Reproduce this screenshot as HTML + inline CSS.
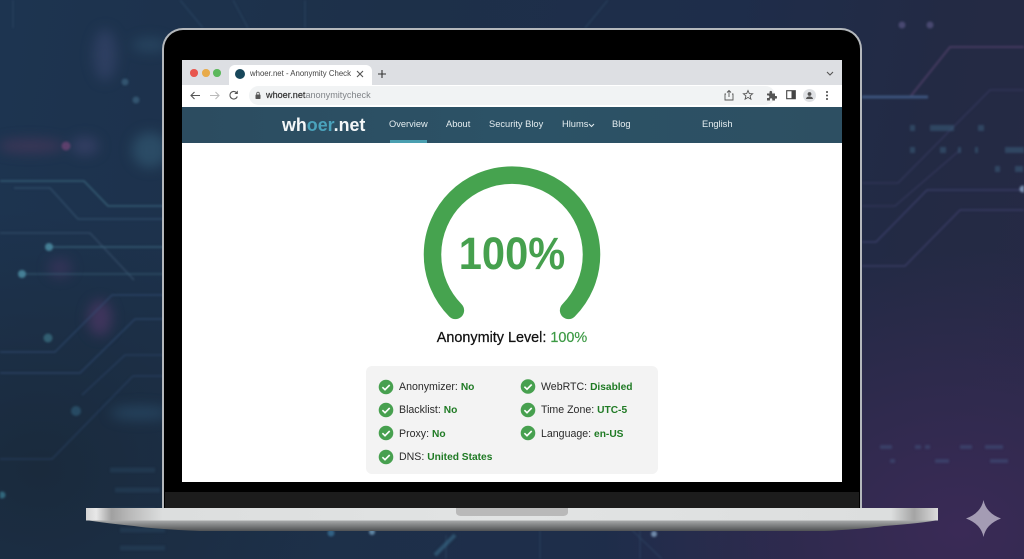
<!DOCTYPE html>
<html><head><meta charset="utf-8"><style>
*{margin:0;padding:0;box-sizing:border-box}
html,body{width:1024px;height:559px;overflow:hidden;background:#1d2f48;font-family:"Liberation Sans",sans-serif}
.a{position:absolute;white-space:nowrap}
#bg{position:absolute;left:0;top:0;width:1024px;height:559px;background:linear-gradient(100deg,#1d3450 0%,#1d3049 35%,#1e2d4a 65%,#232a44 85%,#262945 100%)}
#bg2{position:absolute;left:0;top:0;width:1024px;height:559px;background:radial-gradient(360px 280px at 960px 530px,#3a2a56 0%,rgba(58,42,86,0) 100%),radial-gradient(300px 260px at 40px 470px,#1a2a3c 0%,rgba(26,42,60,0) 100%)}
.nav{color:#e4edf0;font-size:9.3px;top:119px}
.it{font-size:10.6px;color:#2a2a2a}
.it b{color:#1f7a24;font-weight:bold;font-size:10.2px}
</style></head><body>
<div id="bg"></div><div id="bg2"></div>
<svg class="a" style="left:0;top:0;filter:blur(6px)" width="1024" height="559">
<ellipse cx="105" cy="55" rx="12" ry="26" fill="#46507c" opacity=".4"/>
<ellipse cx="30" cy="146" rx="35" ry="7" fill="#5a3a60" opacity=".5"/>
<ellipse cx="85" cy="146" rx="14" ry="9" fill="#4a4a78" opacity=".5"/>
<ellipse cx="100" cy="318" rx="12" ry="18" fill="#5c3a70" opacity=".55"/>
<ellipse cx="60" cy="268" rx="12" ry="10" fill="#5c3a70" opacity=".35"/>
<ellipse cx="150" cy="150" rx="18" ry="18" fill="#36607a" opacity=".55"/>
<ellipse cx="150" cy="45" rx="18" ry="7" fill="#36607a" opacity=".4"/>
<ellipse cx="140" cy="413" rx="30" ry="7" fill="#2f5878" opacity=".5"/>
</svg>
<svg class="a" style="left:0;top:0;filter:blur(1.1px)" width="1024" height="559" fill="none">
<g stroke="#47798f" stroke-width="1.3" opacity=".7">
<path d="M0 181H84L108 206H165"/><path d="M14 188H50L78 219H165" stroke="#3c5c78"/><path d="M0 233H90L134 280" stroke="#3e5873"/><path d="M50 247H165"/><path d="M22 274H165" opacity=".7"/>
</g>
<g stroke="#34507a" stroke-width="1.2" opacity=".7">
<path d="M0 352H55L112 295H165"/><path d="M0 373H80L135 319H165"/><path d="M82 395L125 355H165" opacity=".7"/><path d="M0 459H52L133 376H165" opacity=".7"/>
</g>
<g stroke-width="1.3" opacity=".65">
<path d="M862 97H910L950 47H1024" stroke="#5a4470" stroke-width="2"/>
<path d="M862 97H928" stroke="#4b6a9a" stroke-width="3"/>
<path d="M862 183H898L990 90H1024" stroke="#3d3f68"/><path d="M862 206H895L960 150" stroke="#3d3f68"/>
<path d="M862 242H876L927 190H1024" stroke="#4a4c80"/><path d="M862 266H905L960 210H1024" stroke="#4a4a7c"/>
</g>
<g opacity=".35" stroke="#416a8a"><path d="M233 0 248 28M180 0 203 28M608 0 585 28M13 0V28M305 0V28"/><path d="M662 559 632 530M446 535V559M540 530V559M640 530V559"/></g>
<g opacity=".8">
<circle cx="66" cy="146" r="4.500" fill="#8a4a80" opacity=".7"/><circle cx="125" cy="82" r="3.500" fill="#4b7a94" opacity=".6"/><circle cx="136" cy="100" r="3.500" fill="#4b7a94" opacity=".6"/>
<circle cx="49" cy="247" r="4" fill="#4f93a8"/><circle cx="22" cy="274" r="4" fill="#4f93a8"/><circle cx="48" cy="338" r="4.500" fill="#3f7a8c" opacity=".8"/><circle cx="2" cy="495" r="3.500" fill="#3f8aa0" opacity=".8"/><circle cx="76" cy="411" r="5" fill="#2f5c78" opacity=".8"/>
<circle cx="902" cy="25" r="3.500" fill="#5f5a8a" opacity=".8"/><circle cx="930" cy="25" r="3.500" fill="#5f5a8a" opacity=".8"/>
<circle cx="1023" cy="189" r="3.500" fill="#8ea8c8"/>
<path d="M910 128h5M930 128h24M978 128h6M910 150h5M940 150h6M958 150h3M975 150h3M1005 150h19M995 169h5M1015 169h8" stroke="#3f6c88" stroke-width="6" opacity=".55"/>
<path d="M880 447h12M915 447h6M925 447h5M960 447h12M985 447h18M890 461h5M935 461h14M990 461h18" stroke="#46608a" stroke-width="4" opacity=".5"/>
<circle cx="331" cy="533" r="3.500" fill="#3f80a8" opacity=".8"/><circle cx="372" cy="532" r="3" fill="#7aa8c8" opacity=".9"/><circle cx="654" cy="534" r="3" fill="#90b0d0" opacity=".9"/>
<path d="M110 470h45M115 490h45M110 510h45M120 530h45M120 548h45" stroke="#2e4c68" stroke-width="5" opacity=".45"/>
<path d="M435 555 455 535" stroke="#3f7a98" stroke-width="4" opacity=".6"/>
</g>
</svg>

<!-- laptop lid -->
<div class="a" style="left:162px;top:28px;width:700px;height:481px;background:#000;border:2px solid #b4b8bc;border-bottom:0;border-radius:21px 21px 0 0"></div>
<div class="a" style="left:165px;top:492px;width:694px;height:16px;background:#1c1c1c"></div>

<!-- base -->
<svg class="a" style="left:84px;top:506px" width="856" height="26">
<defs>
<linearGradient id="h" x1="0" x2="1" y1="0" y2="0"><stop offset="0" stop-color="#d4d4d4"/><stop offset=".012" stop-color="#e8e8e8"/><stop offset=".03" stop-color="#a0a0a0"/><stop offset=".05" stop-color="#b8b8b8"/><stop offset=".09" stop-color="#dcdede"/><stop offset=".5" stop-color="#e2e4e4"/><stop offset=".945" stop-color="#dcdede"/><stop offset=".972" stop-color="#a4a4a4"/><stop offset="1" stop-color="#dcdcdc"/></linearGradient>
<linearGradient id="v" x1="0" x2="0" y1="0" y2="1"><stop offset=".5" stop-color="#b0b2b2"/><stop offset="1" stop-color="#505254"/></linearGradient>
</defs>
<path d="M2 2H854V14Q840 17 800 20Q780 23 740 25H116Q70 23 50 20Q20 17 2 14Z" fill="url(#v)"/>
<path d="M2 2H854V14.500H2Z" fill="url(#h)"/>
<path d="M372 2H484V6Q484 10 478 10H378Q372 10 372 6Z" fill="#b9b9b9"/>
</svg>

<!-- screen -->
<div class="a" style="left:182px;top:60px;width:660px;height:422px;background:#fff;overflow:hidden">
 <div class="a" style="left:0;top:0;width:660px;height:25px;background:#dddfe3"></div>
 <div class="a" style="left:0;top:25px;width:660px;height:21px;background:#fff"></div>
 <div class="a" style="left:0;top:47px;width:660px;height:36px;background:linear-gradient(90deg,#2c4c60,#2c5266 50%,#2d4f62)"></div>
 <div class="a" style="left:208px;top:80px;width:37px;height:3px;background:#4a9fb0"></div>
 <!-- traffic -->
 <div class="a" style="left:8px;top:9px;width:7.5px;height:7.5px;border-radius:50%;background:#e8574f"></div>
 <div class="a" style="left:20px;top:9px;width:7.5px;height:7.5px;border-radius:50%;background:#e8ab4a"></div>
 <div class="a" style="left:31px;top:9px;width:7.5px;height:7.5px;border-radius:50%;background:#5cb85c"></div>
 <!-- tab -->
 <div class="a" style="left:47px;top:5px;width:143px;height:21px;background:#fff;border-radius:6px 6px 0 0"></div>
 <div class="a" style="left:53px;top:9px;width:10px;height:10px;border-radius:50%;background:#17475a"></div>
 <div class="a" style="left:68px;top:9px;font-size:7.8px;line-height:10px;color:#444">whoer.net - Anonymity Check</div>
 <svg class="a" style="left:174px;top:10px" width="8" height="8" stroke="#555" stroke-width="1.1"><path d="M1 1 7 7M7 1 1 7"/></svg>
 <svg class="a" style="left:195px;top:9px" width="10" height="10" stroke="#333" stroke-width="1.1"><path d="M5 1V9M1 5H9"/></svg>
 <svg class="a" style="left:644px;top:11px" width="8" height="6" fill="none" stroke="#555" stroke-width="1.1"><path d="M1 1 4 4 7 1"/></svg>
 <!-- toolbar -->
 <svg class="a" style="left:8px;top:29px" width="52" height="13" fill="none" stroke="#555" stroke-width="1.1">
  <path d="M1 6.5H10M4.500 3 1 6.5 4.500 10"/>
  <path d="M20 6.5H29M25.500 3 29 6.5 25.500 10" stroke="#bbb"/>
  <path d="M46.500 3.600A3.800 3.800 0 1 0 47.300 7.500"/><path d="M47.800 1.500V5H44.300Z" fill="#555" stroke="none"/>
 </svg>
 <div class="a" style="left:67px;top:26px;width:526px;height:19px;border-radius:10px;background:#f1f3f4"></div>
 <svg class="a" style="left:72px;top:31px" width="8" height="9"><rect x="1.5" y="3.5" width="5" height="4.5" rx=".8" fill="#555"/><path d="M2.700 3.500V2.500a1.300 1.300 0 0 1 2.600 0V3.500" fill="none" stroke="#555" stroke-width=".8"/></svg>
 <div class="a" style="left:84px;top:30px;font-size:9.1px;line-height:11px;color:#808488"><span style="color:#333;-webkit-text-stroke:.2px #333">whoer.net</span>anonymitycheck</div>
 <svg class="a" style="left:541px;top:29px" width="12" height="13" fill="none" stroke="#555" stroke-width=".9"><path d="M3 5H2V11H10V5H9M6 8V1.500M4 3.500 6 1.500 8 3.500"/></svg>
 <svg class="a" style="left:560px;top:29px" width="12" height="12" fill="none" stroke="#555" stroke-width=".9"><path d="M6 1.500 7.300 4.600 10.600 4.800 8.100 6.900 8.900 10.200 6 8.400 3.100 10.200 3.900 6.900 1.400 4.800 4.700 4.600Z"/></svg>
 <svg class="a" style="left:584px;top:30px" width="11" height="11" fill="#555"><path d="M1 3.500H3.500V2.200a1.300 1.300 0 0 1 2.600 0V3.500H9V6H10a1.200 1.200 0 0 1 0 2.600H9V10.500H6.300V9.500a1.200 1.200 0 0 0-2.400 0V10.500H1V8H2a1.300 1.300 0 0 0 0-2.600H1Z"/></svg>
 <svg class="a" style="left:604px;top:30px" width="11" height="10"><rect x=".7" y=".7" width="8.600" height="8" fill="none" stroke="#444" stroke-width="1.1"/><rect x="5.500" y="1" width="4" height="7.500" fill="#444"/></svg>
 <div class="a" style="left:621px;top:29px;width:13px;height:13px;border-radius:50%;background:#e0e2e5"></div>
 <svg class="a" style="left:621px;top:29px" width="13" height="13" fill="#555"><circle cx="6.500" cy="5" r="1.900"/><path d="M3 10a3.500 2.600 0 0 1 7 0Z"/></svg>
 <svg class="a" style="left:643px;top:30px" width="4" height="11" fill="#444"><circle cx="2" cy="2" r="1"/><circle cx="2" cy="5.500" r="1"/><circle cx="2" cy="9" r="1"/></svg>
 <!-- nav -->
 <div class="a" style="left:100px;top:54px;font-size:18.5px;line-height:22px;font-weight:bold;color:#f4f7f8;transform:scaleX(.965);transform-origin:0 50%">wh<span style="color:#4aa3bc">oer</span>.net</div>
</div>
<div class="a nav" style="left:389px">Overview</div>
<div class="a nav" style="left:446px">About</div>
<div class="a nav" style="left:489px">Security Bloy</div>
<div class="a nav" style="left:562px">Hlums</div>
<svg class="a" style="left:588px;top:123px" width="7" height="5" fill="none" stroke="#e4edf0" stroke-width="1"><path d="M1 1 3.500 3.500 6 1"/></svg>
<div class="a nav" style="left:612px">Blog</div>
<div class="a nav" style="left:702px">English</div>

<!-- gauge -->
<svg class="a" style="left:412px;top:155px" width="200" height="170" fill="none"><path d="M43.400 155.400A79.500 79.500 0 1 1 156.600 155.400" stroke="#46a34f" stroke-width="17.500" stroke-linecap="round"/></svg>
<div class="a" style="left:412px;width:200px;top:227px;text-align:center;font-size:45px;line-height:54px;font-weight:bold;color:#46a04e;transform:scaleX(.925)">100%</div>
<div class="a" style="left:412px;width:200px;top:329px;text-align:center;font-size:14.4px;line-height:18px;color:#111;-webkit-text-stroke:.25px #111">Anonymity Level: <span style="color:#3d9a45;-webkit-text-stroke:.2px #3d9a45">100%</span></div>

<!-- panel -->
<div class="a" style="left:366px;top:366px;width:292px;height:108px;background:#f3f3f3;border-radius:6px"></div>
<svg class="a" style="left:366px;top:366px" width="292" height="108">
 <defs><g id="c"><circle r="7.300" fill="#47a04f"/><path d="M-3.600 .2-1 2.700 3.700-2" fill="none" stroke="#fff" stroke-width="1.600"/></g></defs>
 <use href="#c" x="20" y="21"/><use href="#c" x="20" y="44"/><use href="#c" x="20" y="67"/><use href="#c" x="20" y="91"/>
 <use href="#c" x="162" y="20.500"/><use href="#c" x="162" y="44"/><use href="#c" x="162" y="67"/>
</svg>
<div class="a it" style="left:399px;top:381px">Anonymizer: <b>No</b></div>
<div class="a it" style="left:399px;top:404px">Blacklist: <b>No</b></div>
<div class="a it" style="left:399px;top:428px">Proxy: <b>No</b></div>
<div class="a it" style="left:399px;top:451px">DNS: <b>United States</b></div>
<div class="a it" style="left:541px;top:381px">WebRTC: <b>Disabled</b></div>
<div class="a it" style="left:541px;top:404px">Time Zone: <b>UTC-5</b></div>
<div class="a it" style="left:541px;top:428px">Language: <b>en-US</b></div>

<!-- sparkle -->
<svg class="a" style="left:965px;top:499px" width="38" height="40"><path d="M18.500 1Q21 14 36 19.500Q21 25 18.500 38Q16 25 1 19.500Q16 14 18.500 1Z" fill="#a49cb4"/></svg>
</body></html>
